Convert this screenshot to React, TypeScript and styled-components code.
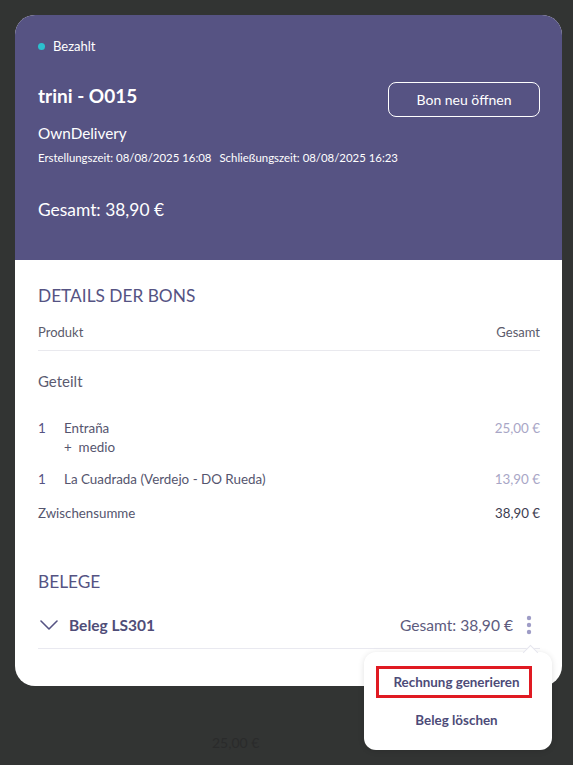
import React from "react";
import styled, { createGlobalStyle } from "styled-components";

const Global = createGlobalStyle`
  html, body { margin: 0; padding: 0; }
  body {
    background: #323433;
    font-family: Lato, "Open Sans", sans-serif;
    -webkit-font-smoothing: antialiased;
  }
`;

const Page = styled.div`
  position: relative;
  height: 765px;
  padding: 15px 11px 0 15px;
  box-sizing: border-box;
  overflow: hidden;
`;

const Card = styled.div`
  width: 547px;
  border-radius: 20px;
  background: #ffffff;
  overflow: hidden;
`;

const Header = styled.div`
  background: #565383;
  color: #ffffff;
  padding: 23px 22px 38px 23px;
  display: flex;
  flex-direction: column;
`;

const Status = styled.div`
  display: flex;
  align-items: center;
  gap: 8px;
  font-size: 13px;
  line-height: 16px;
`;

const Dot = styled.span`
  width: 7px;
  height: 7px;
  border-radius: 50%;
  background: #2bc0cf;
`;

const TitleRow = styled.div`
  margin-top: 28px;
  display: flex;
  justify-content: space-between;
  align-items: flex-start;
`;

const Title = styled.h1`
  margin: 0;
  font-size: 19px;
  line-height: 28px;
  font-weight: 700;
`;

const OutlineButton = styled.button`
  width: 152px;
  height: 35px;
  border: 1px solid #ffffff;
  border-radius: 8px;
  background: transparent;
  color: #ffffff;
  font-family: inherit;
  font-size: 14px;
  cursor: pointer;
`;

const Channel = styled.div`
  margin-top: 6px;
  font-size: 15.3px;
  line-height: 20px;
`;

const Times = styled.div`
  margin-top: 7px;
  font-size: 11.4px;
  line-height: 16px;
  display: flex;
  gap: 8px;
`;

const HeaderTotal = styled.div`
  margin-top: 32px;
  font-size: 17.4px;
  line-height: 24px;
`;

const Body = styled.div`
  padding: 24px 22px 37px 23px;
  display: flex;
  flex-direction: column;
`;

const SectionTitle = styled.h2<{ $gap?: number }>`
  margin: ${(p) => p.$gap ?? 0}px 0 0;
  font-size: 17.3px;
  line-height: 24px;
  font-weight: 400;
  color: #555383;
`;

const TableHead = styled.div`
  margin-top: 15px;
  display: flex;
  justify-content: space-between;
  font-size: 13px;
  line-height: 18px;
  color: #5b5b6b;
  padding-bottom: 9px;
  border-bottom: 1px solid #e9e9ee;
`;

const Group = styled.div`
  margin-top: 20px;
  font-size: 15px;
  line-height: 20px;
  color: #5b5b70;
`;

const Item = styled.div<{ $gap: number }>`
  margin-top: ${(p) => p.$gap}px;
  display: grid;
  grid-template-columns: 26px 1fr auto;
  font-size: 13.4px;
  line-height: 19px;
  color: #55556e;
`;

const Qty = styled.span`
  color: #555383;
`;

const ItemName = styled.div`
  display: flex;
  flex-direction: column;
`;

const Modifier = styled.span`
  color: #55556e;
`;

const Price = styled.span`
  color: #a8a6c6;
`;

const Subtotal = styled.div`
  margin-top: 15px;
  display: flex;
  justify-content: space-between;
  font-size: 13.3px;
  line-height: 19px;
  color: #55556e;
`;

const SubtotalValue = styled.span`
  color: #3c3c50;
`;

const ReceiptRow = styled.div`
  margin-top: 8px;
  height: 47px;
  display: flex;
  align-items: center;
  border-bottom: 1px solid #e9e9f0;
  box-sizing: border-box;
`;

const Chevron = styled.svg`
  margin-left: 2px;
  width: 18px;
  height: 10px;
  flex: none;
`;

const ReceiptName = styled.span`
  margin-left: 11px;
  font-size: 15.5px;
  font-weight: 700;
  color: #4f4d78;
`;

const ReceiptTotal = styled.span`
  margin-left: auto;
  font-size: 15.6px;
  color: #5d5b7e;
`;

const Kebab = styled.svg`
  margin-left: 13px;
  margin-right: 8px;
  width: 6px;
  height: 20px;
`;

const Menu = styled.div`
  position: absolute;
  left: 364px;
  top: 652px;
  width: 188px;
  height: 98px;
  background: #ffffff;
  border-radius: 12px;
  box-shadow: 0 1px 6px rgba(0, 0, 0, 0.12);
  padding: 14px 20px 0 12px;
  box-sizing: border-box;
  display: flex;
  flex-direction: column;
`;

const MenuArrow = styled.span`
  position: absolute;
  top: -5px;
  left: 161px;
  width: 10px;
  height: 10px;
  background: #ffffff;
  transform: rotate(45deg);
  border-top: 1px solid #e6e6ee;
  border-left: 1px solid #e6e6ee;
`;

const MenuItem = styled.div<{ $focused?: boolean }>`
  height: 32px;
  box-sizing: border-box;
  display: flex;
  align-items: center;
  justify-content: center;
  padding-left: 5px;
  font-size: 13.4px;
  font-weight: 700;
  color: #4d4b78;
  border: 3px solid ${(p) => (p.$focused ? "#e01a22" : "transparent")};
  & + & {
    margin-top: 6px;
  }
`;

const Ghost = styled.div`
  position: absolute;
  left: 212px;
  top: 734px;
  font-size: 14px;
  line-height: 18px;
  color: #2a2b2b;
`;

export default function App() {
  return (
    <>
      <Global />
      <Page>
        <Card>
          <Header>
            <Status>
              <Dot />
              Bezahlt
            </Status>
            <TitleRow>
              <Title>trini - O015</Title>
              <OutlineButton>Bon neu öffnen</OutlineButton>
            </TitleRow>
            <Channel>OwnDelivery</Channel>
            <Times>
              <span>Erstellungszeit: 08/08/2025 16:08</span>
              <span>Schließungszeit: 08/08/2025 16:23</span>
            </Times>
            <HeaderTotal>Gesamt: 38,90 €</HeaderTotal>
          </Header>
          <Body>
            <SectionTitle>DETAILS DER BONS</SectionTitle>
            <TableHead>
              <span>Produkt</span>
              <span>Gesamt</span>
            </TableHead>
            <Group>Geteilt</Group>
            <Item $gap={28}>
              <Qty>1</Qty>
              <ItemName>
                <span>Entraña</span>
                <Modifier>+&nbsp;&nbsp;medio</Modifier>
              </ItemName>
              <Price>25,00 €</Price>
            </Item>
            <Item $gap={13}>
              <Qty>1</Qty>
              <ItemName>
                <span>La Cuadrada (Verdejo - DO Rueda)</span>
              </ItemName>
              <Price>13,90 €</Price>
            </Item>
            <Subtotal>
              <span>Zwischensumme</span>
              <SubtotalValue>38,90 €</SubtotalValue>
            </Subtotal>
            <SectionTitle $gap={47}>BELEGE</SectionTitle>
            <ReceiptRow>
              <Chevron viewBox="0 0 18 10">
                <polyline
                  points="1,1 9,9 17,1"
                  fill="none"
                  stroke="#555383"
                  strokeWidth="1.6"
                  strokeLinecap="round"
                  strokeLinejoin="round"
                />
              </Chevron>
              <ReceiptName>Beleg LS301</ReceiptName>
              <ReceiptTotal>Gesamt: 38,90 €</ReceiptTotal>
              <Kebab viewBox="0 0 6 20">
                <circle cx="3" cy="3" r="2.2" fill="#9e9cc6" />
                <circle cx="3" cy="10" r="2.2" fill="#9e9cc6" />
                <circle cx="3" cy="17" r="2.2" fill="#9e9cc6" />
              </Kebab>
            </ReceiptRow>
          </Body>
        </Card>
        <Ghost>25,00 €</Ghost>
        <Menu>
          <MenuArrow />
          <MenuItem $focused>Rechnung generieren</MenuItem>
          <MenuItem>Beleg löschen</MenuItem>
        </Menu>
      </Page>
    </>
  );
}
